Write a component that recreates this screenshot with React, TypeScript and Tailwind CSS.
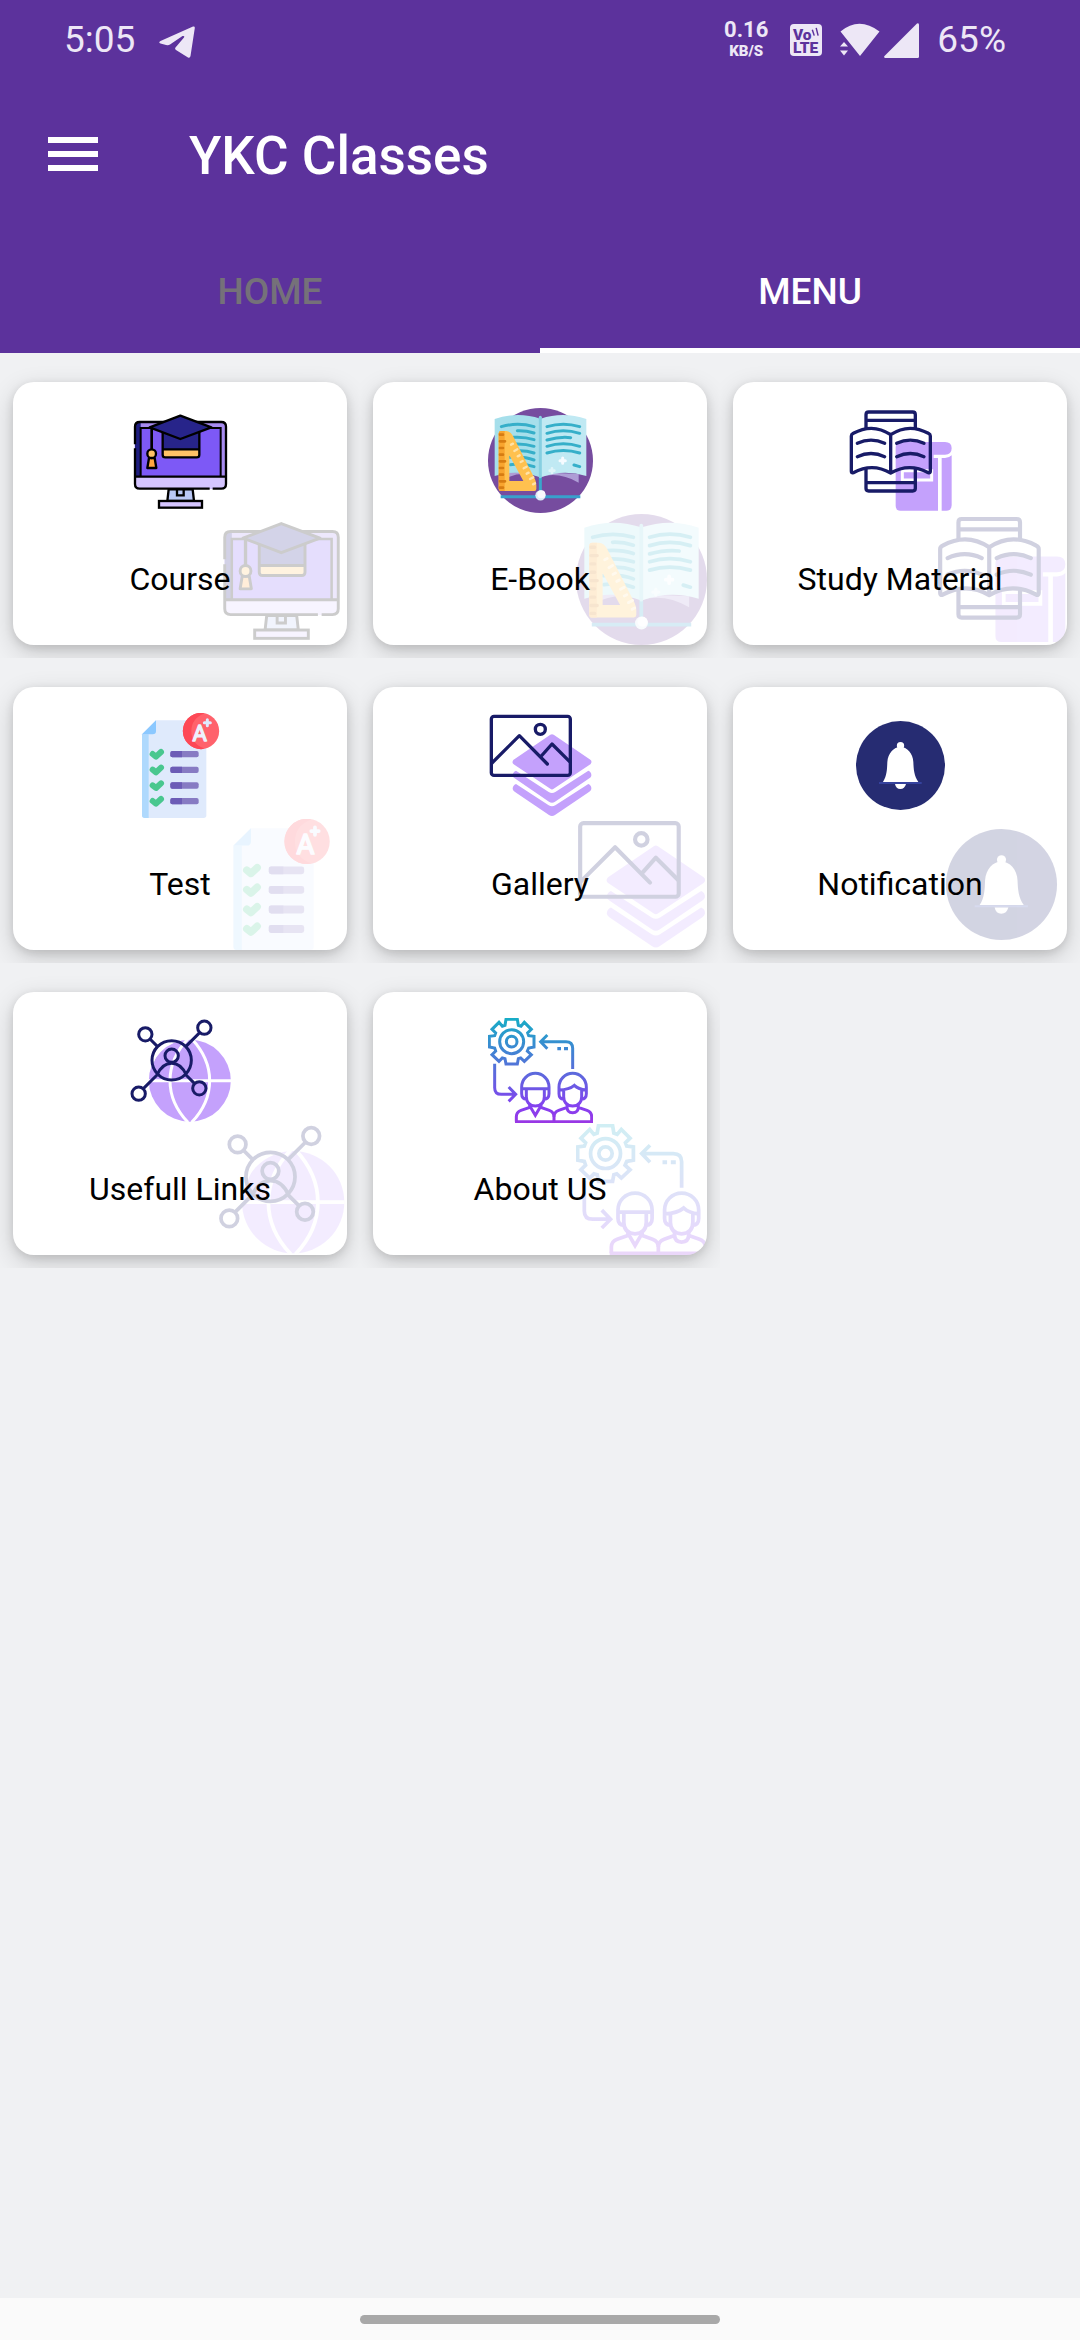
import { useId, useState, type ReactNode } from "react";

type IconProps = { className?: string };

function TileIcon({ className, children }: IconProps & { children: ReactNode }) {
  return (
    <svg viewBox="381 114 315 315" fill="none" className={className} aria-hidden="true">
      {children}
    </svg>
  );
}

function CourseIcon({ className }: IconProps) {
  return (
    <TileIcon className={className}>
      <rect x="401" y="157" width="273" height="199" rx="14" fill="#a78bef" />
      <path d="M419 157h-4q-13 0-13 13v150h17Z" fill="#1f1d80" />
      <path d="M402 320h273v22q0 14-14 14H416q-14 0-14-14Z" fill="#d5c5ff" />
      <path d="M419 320V174h240v146" fill="#7d59f6" stroke="#000" strokeWidth="6" />
      <path d="M402 223v-53q0-14 14-14h245q14 0 14 14v172q0 14-14 14h-26M626 356H416q-14 0-14-14V235M402 320h273" stroke="#000" strokeWidth="7" />
      <path d="m503 358-4 35h80l-4-35Z" fill="#bac8f6" stroke="#000" strokeWidth="7" />
      <path d="M528 358v18h20v-18" stroke="#000" strokeWidth="7" />
      <rect x="474" y="393" width="129" height="20" fill="#d5c5ff" stroke="#000" strokeWidth="7" />
      <path d="M485 182v72q0 8 8 8h94q8 0 8-8v-72Z" fill="#27248a" />
      <path d="M485 238h110v16q0 8-8 8h-94q-8 0-8-8Z" fill="#ffc266" />
      <path d="M485 182v72q0 8 8 8h94q8 0 8-8v-72M485 238h110" stroke="#000" strokeWidth="7" />
      <path d="m446 172 92-35 93 35-93 35Z" fill="#27248a" stroke="#000" strokeWidth="7" strokeLinejoin="round" />
      <path d="M452 174v66" stroke="#000" strokeWidth="8" />
      <path d="m444 264-5 30h27l-5-30Z" fill="#ffa640" stroke="#000" strokeWidth="7" strokeLinejoin="round" />
      <circle cx="452" cy="251" r="13" fill="#ffc266" stroke="#000" strokeWidth="7" />
    </TileIcon>
  );
}

function EBookIcon({ className }: IconProps) {
  return (
    <TileIcon className={className}>
      <circle cx="538.5" cy="271.5" r="157.5" fill="#764c9f" />
      <path d="M423 330q60-32 115-9v-14H423ZM538 321q55-17 115 17v-26l-115-5Z" fill="#ae9dd6" />
      <path d="M401 147q69-24 137-1v176q-68-26-137-4Z" fill="#a6dfeb" />
      <path d="M676 147q-69-24-137-1v176q68-26 137-4Z" fill="#c0e9f3" />
      <path d="M538 322v42" stroke="#38a6cb" strokeWidth="9" />
      <path d="M538 142v178" stroke="#87cfe1" strokeWidth="9" strokeLinecap="round" />
      <path d="M419 380h239" stroke="#38a0cc" strokeWidth="9" />
      <path
        d="M421 170q49-14 98 0M469 182q26-1 50 7M457 202q34-2 62 7M457 222q34-2 62 7M470 242q26-1 49 7M446 262q42-4 73 8M448 284q38-6 71 6M558 170q49-15 98 0M558 190q49-15 98 0M558 210q40-11 71-7M558 229q49-15 98 0M558 249q49-15 98 0M639 285l17 5"
        stroke="#36afc9"
        strokeWidth="9"
        strokeLinecap="round"
      />
      <path d="M605 264v16M597 272h16" stroke="#f6fbff" strokeWidth="9" strokeLinecap="round" />
      <path d="M573 295v14M566 302h14" stroke="#e0f4f9" strokeWidth="8" strokeLinecap="round" />
      <path
        fillRule="evenodd"
        d="M420 183h16q13 1 20 15l66 130q4 8 4 18v11q0 6-6 6H420q-7 0-7-7V190q0-7 7-7ZM445 256v77h42Z"
        fill="#ffc14f"
      />
      <path d="M431 183h-11q-7 0-7 7v166q0 7 7 7h11Z" fill="#f8a52f" />
      <path
        d="M417 194h9M417 214h15M417 234h9M417 254h9M417 274h15M417 294h9M417 314h9M417 334h15M417 353h9"
        stroke="#d67c12"
        strokeWidth="8"
        strokeLinecap="round"
      />
      <path
        d="m450 224 6-3M460 243l9-5M470 259l6-3M479 276l6-3M488 295l9-5M497 311l6-3M507 327l10-5M516 343l6-3"
        stroke="#ffe2a8"
        strokeWidth="7"
        strokeLinecap="round"
      />
      <circle cx="538.5" cy="376" r="15.5" fill="#ddeaf6" />
      <circle cx="541" cy="373" r="12" fill="#faf9fc" />
    </TileIcon>
  );
}

function StudyIcon({ className }: IconProps) {
  return (
    <TileIcon className={className}>
      <path d="M540 216h132q20 0 20 19t-20 19h-34v10h13v158H538q-14 0-14-14V232q0-16 16-16Z" fill="#c4a1fc" />
      <path d="M662 264h10q12 0 20-8v150q0 16-16 16h-14Z" fill="#c4a1fc" />
      <path d="M544 302v28h88v-28Z" stroke="#fff" strokeWidth="9" />
      <g stroke="#181b67" strokeWidth="10" strokeLinecap="round" strokeLinejoin="round">
        <path d="M435 174v-40q0-8 8-8h132q8 0 8 8v40M437 151h144M435 297v58q0 8 8 8h132q8 0 8-8v-58M437 338h144" />
        <path d="M509 194q-54-36-112-4-6 3-6 8v106q0 6 6 4 57-31 112 1 55-32 113-1 6 2 6-4V198q0-5-6-8-59-32-113 4ZM509 194v115" />
        <path d="M409 220q41-19 82 0M409 260q41-19 82 0M527 220q41-19 82 0M527 260q41-19 82 0" />
      </g>
    </TileIcon>
  );
}

function TestIcon({ className }: IconProps) {
  return (
    <TileIcon className={className}>
      <path d="M423 178l42-42h151v285q0 8-8 8H431q-8 0-8-8Z" fill="#dfeafc" />
      <path d="M423 178h20v251h-12q-8 0-8-8Z" fill="#afd9fd" />
      <path d="m423 178 42-42v32q0 10-10 10Z" fill="#8bc8ff" />
      <circle cx="600" cy="168" r="54.5" fill="#ff626c" />
      <path d="M600 113.500a54.500 54.500 0 0 0 0 109q6 0 10-2-39-14-39-52t39-53q-5-2-10-2Z" fill="#fd4856" />
      <text
        x="596"
        y="197"
        textAnchor="middle"
        fontFamily="Roboto, sans-serif"
        fontSize="66"
        fontWeight="400"
        fill="#eef1fd"
        stroke="#eef1fd"
        strokeWidth="4"
        strokeLinejoin="round"
      >
        A
      </text>
      <path d="M619 134v18M610 143h18" stroke="#dfeafc" strokeWidth="9" strokeLinecap="round" />
      {[237, 284, 331, 378].map((y) => (
        <g key={y}>
          <path d={`M455 ${y}l10 8 15-14`} stroke="#49c78f" strokeWidth="18" strokeLinecap="round" strokeLinejoin="round" />
          <rect x="508" y={y - 9} width="85" height="19" rx="6" fill="#877bc3" />
          <path d={`M543 ${y - 9}h-29q-6 0-6 6v7q0 6 6 6h29Z`} fill="#6c5cb6" />
        </g>
      ))}
    </TileIcon>
  );
}

function GalleryIcon({ className }: IconProps) {
  const layer = "M465 287q-10 4-10 15 1 5 6 8l103 70q9 6 18 0l103-70q5-3 6-8 1-11-9-15l-99 64q-10 6-20 0Z";
  return (
    <TileIcon className={className}>
      <path d="m573 187 109 74-109 73-109-73Z" fill="#c4a1fc" stroke="#c4a1fc" strokeWidth="18" strokeLinejoin="round" />
      <path d={layer} fill="#c4a1fc" />
      <path d={layer} fill="#c4a1fc" transform="translate(0 40)" />
      <g stroke="#181b67" strokeWidth="10" strokeLinecap="round" strokeLinejoin="round">
        <rect x="391" y="124" width="237" height="177" rx="8" />
        <circle cx="538" cy="163" r="15" />
        <path d="m393 264 82-82 84 85M541 243l32-36 53 53" />
      </g>
    </TileIcon>
  );
}

function BellIcon({ className }: IconProps) {
  return (
    <TileIcon className={className}>
      <circle cx="538.5" cy="271.500" r="133.500" fill="#262c72" />
      <circle cx="538.5" cy="212" r="11" fill="#fff" />
      <path d="M486 321c12-19 12-38 13-60 2-26 19-45 39-45s38 19 39 45c1 22 2 41 15 60Z" fill="#fff" />
      <path d="M474 324h128" stroke="#3b4aad" strokeWidth="5" />
      <path d="M522 327h33q-4 15-17 15t-16-15Z" fill="#fff" />
    </TileIcon>
  );
}

function LinksIcon({ className }: IconProps) {
  return (
    <TileIcon className={className}>
      <circle cx="566.5" cy="302" r="123" fill="#c4a1fc" />
      <path
        d="M443 302h247M561 427c-72-76-72-174 0-251M572 427c72-76 72-174 0-251"
        stroke="#fff"
        strokeWidth="9"
      />
      <path d="M454 250q15-50 66-66" stroke="#fff" strokeWidth="7" />
      <g stroke="#181b67" strokeWidth="9">
        <circle cx="512" cy="241" r="59" />
        <circle cx="512" cy="227" r="20" />
        <circle cx="433" cy="163" r="20" />
        <circle cx="610" cy="143" r="20" />
        <circle cx="413" cy="341" r="20" />
        <circle cx="595" cy="325" r="20" />
        <path d="M468 285q16-35 44-35t44 35M447 177l22 22M596 158l-41 41M427 326l41-41M581 311l-26-26" />
      </g>
    </TileIcon>
  );
}

function AboutIcon({ className }: IconProps) {
  const id = useId();
  return (
    <TileIcon className={className}>
      <linearGradient id={id} gradientUnits="userSpaceOnUse" x1="0" y1="114" x2="0" y2="429">
        <stop offset="0" stopColor="#17adc6" />
        <stop offset="0.5" stopColor="#596ddb" />
        <stop offset="0.85" stopColor="#8540f0" />
        <stop offset="1" stopColor="#9a37e4" />
      </linearGradient>
      <g stroke={`url(#${id})`} strokeWidth="9">
        <path d="M435 118h34l3 18 8 3 10-12 21 21-11 11 3 8 16 2v32l-16 3-4 9 12 11-21 20-11-10-7 2-3 16h-34l-3-16-8-2-10 10-21-20 11-11-3-9-16-3v-32l16-2 3-8-11-11 21-21 10 12 8-3Z" />
        <circle cx="452" cy="185" r="36" />
        <circle cx="452" cy="185" r="16" />
        <path d="M635 267v-62q0-20-20-20h-76M559 165l-20 20 20 21M401 251v72q0 20 20 20h43M443 321l21 22-21 21" />
        <path d="M482 326v-5a41 41 0 0 1 82 0v5ZM482 326v15q0 15 15 17M564 326v15q0 15-15 17M496 328v22q0 26 27 28 27-2 27-28v-22" />
        <path d="M594 330v-9a41 41 0 0 1 82 0v9q-24-2-36-14-15 13-46 14ZM594 328v13q0 15 15 17M676 328v13q0 15-15 17M608 330v20q0 26 27 28 27-2 27-28v-20" />
        <path d="M466 425v-15q0-14 14-19l26-9v-10M579 425v-15q0-14-14-19l-25-9v-10M506 377l17 29 17-29" />
        <path d="M579 410q0-14 14-19l25-9v-10M692 425v-15q0-14-14-19l-26-9v-10M618 380q0 18 17 18t17-18M462 425h234" />
      </g>
      <path d="M589 201h11v10h-11ZM609 201h12v10h-12Z" fill={`url(#${id})`} />
    </TileIcon>
  );
}

const menuItems = [
  { label: "Course", Icon: CourseIcon },
  { label: "E-Book", Icon: EBookIcon },
  { label: "Study Material", Icon: StudyIcon },
  { label: "Test", Icon: TestIcon },
  { label: "Gallery", Icon: GalleryIcon },
  { label: "Notification", Icon: BellIcon },
  { label: "Usefull Links", Icon: LinksIcon },
  { label: "About US", Icon: AboutIcon },
];

function StatusBar() {
  return (
    <div className="flex h-20 items-center justify-between pl-16 pr-[74px] text-[37px] leading-10 text-[#ede7f6]">
      <div className="flex items-center gap-6">
        <span>5:05</span>
        <svg viewBox="0 0 36 32" fill="currentColor" className="mt-1 h-8 w-9" aria-hidden="true">
          <path d="M34 0.500Q36 0 35.800 2L31.500 30Q31 32.500 29 31.500L17 24Q15.500 23 16.500 21.500L25 11.500Q26 9.500 23.500 10L11 18.500Q9.500 19.500 7 19L1.500 17.500Q-1 16.500 1.500 15Z" />
        </svg>
      </div>
      <div className="flex items-center">
        <div className="flex flex-col items-center gap-0.5">
          <span className="text-[22px] font-bold leading-5">0.16</span>
          <span className="text-[15px] font-black leading-[18px]">KB/S</span>
        </div>
        <svg viewBox="0 0 33 33" className="ml-[22px] size-8" aria-label="VoLTE">
          <rect width="33" height="33" rx="4" fill="currentColor" />
          <g fill="#5c329c" fontFamily="Roboto, sans-serif" fontWeight="900">
            <text x="3" y="16" fontSize="16">Vo</text>
            <text x="3" y="30" fontSize="16">LTE</text>
          </g>
          <path d="m23 6 2 6M27 4l2 8" stroke="#5c329c" strokeWidth="1.500" />
        </svg>
        <svg viewBox="0 0 40 34" fill="currentColor" className="ml-[18px] h-[34px] w-10" aria-hidden="true">
          <path d="M0.500 8.500Q19-7 39.500 8.500L20 33ZM0 23.500l4-4.500 4 4.500ZM0 27.500h8L4 32.500Z" />
        </svg>
        <svg viewBox="0 0 35 35" fill="currentColor" className="ml-1 size-[35px]" aria-hidden="true">
          <path d="M33 0.500Q35-0.500 35 2V33.500Q35 35 33.500 35H1Q-0.500 34.500 0.500 33Z" />
        </svg>
        <span className="ml-[18px]">65%</span>
      </div>
    </div>
  );
}

export default function App() {
  const [tab, setTab] = useState("MENU");

  return (
    <div className="flex min-h-screen flex-col bg-[#f0f1f3] font-['Roboto',sans-serif]">
      <header className="bg-[#5c329c]">
        <StatusBar />
        <div className="flex h-[148px] items-start pl-12 pt-11">
          <button type="button" aria-label="Open menu" className="flex h-[60px] w-[50px] flex-col justify-center gap-2">
            <span className="h-1.5 w-full bg-white" />
            <span className="h-1.5 w-full bg-white" />
            <span className="h-1.5 w-full bg-white" />
          </button>
          <h1 className="ml-[91px] text-[53px] font-medium leading-[64px] text-white">YKC Classes</h1>
        </div>
        <div role="tablist" className="grid h-[125px] grid-cols-2">
          {["HOME", "MENU"].map((name) => (
            <button
              key={name}
              type="button"
              role="tab"
              aria-selected={tab === name}
              onClick={() => setTab(name)}
              className={
                tab === name
                  ? "border-b-[5px] border-white pt-2 text-[37px] font-medium text-white"
                  : "border-b-[5px] border-transparent pt-2 text-[37px] font-medium text-[#757179]"
              }
            >
              {name}
            </button>
          ))}
        </div>
      </header>

      <main className="grid flex-1 grid-cols-3 content-start">
        {menuItems.map(({ label, Icon }) => (
          <div key={label} className="overflow-hidden px-[13px] pb-[13px] pt-[29px]">
            <button
              type="button"
              className="relative flex h-[263px] w-full flex-col items-center overflow-hidden rounded-[21px] bg-white pt-[26px] shadow-[0_8px_26px_rgba(0,0,0,0.16),0_3px_10px_rgba(0,0,0,0.12)]"
            >
              <Icon className="absolute bottom-0 right-0 size-[131px] opacity-20" />
              <Icon className="size-[105px]" />
              <span className="relative mt-[46px] text-[32px] leading-10 text-black">{label}</span>
            </button>
          </div>
        ))}
      </main>

      {/* Gesture bar */}
      <footer className="flex h-[42px] justify-center bg-[#fafafa] pt-[17px]">
        <div className="h-[9px] w-1/3 rounded-full bg-[#a8a8a8]" />
      </footer>
    </div>
  );
}
